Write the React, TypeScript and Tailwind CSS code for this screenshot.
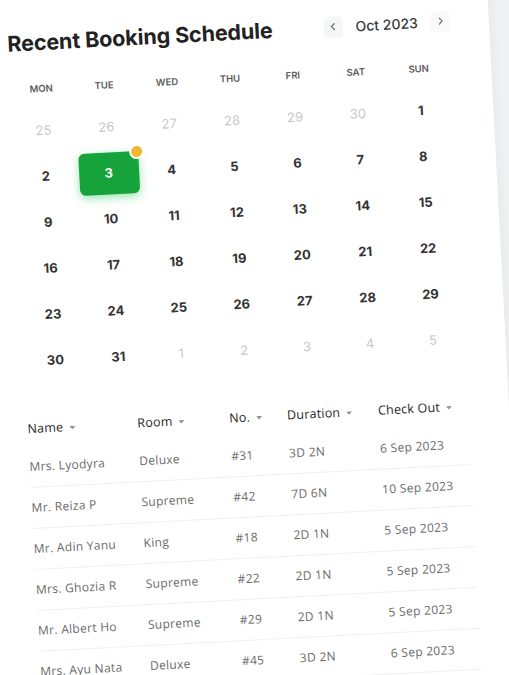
import React from 'react';
import { ChevronLeft, ChevronRight } from 'lucide-react';

const days = ['MON', 'TUE', 'WED', 'THU', 'FRI', 'SAT', 'SUN'];

type Cell = { d: number; muted?: boolean };

const cells: Cell[] = [
  ...[25, 26, 27, 28, 29, 30].map((d) => ({ d, muted: true })),
  ...Array.from({ length: 31 }, (_, i) => ({ d: i + 1 })),
  ...[1, 2, 3, 4, 5].map((d) => ({ d, muted: true })),
];

const bookings = [
  { name: 'Mrs. Lyodyra', room: 'Deluxe', no: '#31', dur: '3D 2N', out: '6 Sep 2023' },
  { name: 'Mr. Reiza P', room: 'Supreme', no: '#42', dur: '7D 6N', out: '10 Sep 2023' },
  { name: 'Mr. Adin Yanu', room: 'King', no: '#18', dur: '2D 1N', out: '5 Sep 2023' },
  { name: 'Mrs. Ghozia R', room: 'Supreme', no: '#22', dur: '2D 1N', out: '5 Sep 2023' },
  { name: 'Mr. Albert Ho', room: 'Supreme', no: '#29', dur: '2D 1N', out: '5 Sep 2023' },
  { name: 'Mrs. Ayu Nata', room: 'Deluxe', no: '#45', dur: '3D 2N', out: '6 Sep 2023' },
];

const Caret = () => (
  <svg width="6" height="4" viewBox="0 0 6 4" className="ml-1.5 mt-0.5">
    <path d="M0 0h6L3 3.5z" fill="#909090" />
  </svg>
);

const Header = ({ label }: { label: string }) => (
  <div className="flex items-center text-[12.5px] font-medium tracking-[0.2px] text-[#262626]">
    {label}
    <Caret />
  </div>
);

const BookingCalendar: React.FC = () => {
  return (
    <div className="w-[509px] h-[675px] overflow-hidden bg-[#eef2f2]">
      <div className="-ml-[100px] w-[587px] min-h-[760px] pl-[100px] bg-white shadow-[2px_0_14px_rgba(0,0,0,0.04)] origin-[100px_0px] -rotate-3">
        <div className="w-[487px] pt-[30px] pl-[5px] font-['Inter',sans-serif]">
          {/* header */}
          <div className="flex items-center h-[28px] w-[441px]">
            <h1 className="text-[21.5px] font-bold text-[#222] tracking-[-0.1px]">
              Recent Booking Schedule
            </h1>
            <div className="ml-auto flex items-center -mr-[2px]">
              <button className="w-[19px] h-[21px] flex items-center justify-center rounded bg-[#f5f6f7] text-[#666]">
                <ChevronLeft size={12} strokeWidth={2.25} />
              </button>
              <span className="mx-[13px] text-[14px] font-medium text-[#3a3a3a]">Oct 2023</span>
              <button className="w-[19px] h-[21px] flex items-center justify-center rounded bg-[#f9f9fa] text-[#666]">
                <ChevronRight size={12} strokeWidth={2.25} />
              </button>
            </div>
          </div>

          {/* calendar */}
          <div className="mt-[23px] w-[441px] grid grid-cols-7">
            {days.map((d) => (
              <div key={d} className="h-[20px] flex items-center justify-center text-[9.5px] font-semibold text-[#5a5a5a]">
                {d}
              </div>
            ))}
          </div>
          <div className="mt-[9px] w-[441px] grid grid-cols-7">
            {cells.map((c, i) => {
              const selected = !c.muted && c.d === 3;
              return (
                <div key={i} className="h-[46px] flex items-center justify-center">
                  {selected ? (
                    <div className="relative w-[60px] h-[42px] rounded-md bg-[#17a33b] shadow-[0_3px_10px_rgba(34,197,94,0.45)] flex items-center justify-center text-[13px] font-bold text-white">
                      3
                      <span className="absolute -top-[7px] -right-[6px] w-[15px] h-[15px] rounded-full bg-[#f4b52f] border-2 border-white" />
                    </div>
                  ) : (
                    <span
                      className={
                        c.muted
                          ? 'text-[13px] text-[#c9c9c9]'
                          : 'text-[13px] font-bold text-[#333]'
                      }
                    >
                      {c.d}
                    </span>
                  )}
                </div>
              );
            })}
          </div>

          {/* table */}
          <div className="mt-[26px] w-[441px] font-['Open_Sans',sans-serif]">
            <div className="grid grid-cols-[110px_92px_58px_91px_1fr] h-[36px] items-center">
              <Header label="Name" />
              <Header label="Room" />
              <Header label="No." />
              <Header label="Duration" />
              <Header label="Check Out" />
            </div>
            {bookings.map((b) => (
              <div
                key={b.name}
                className="grid grid-cols-[110px_92px_58px_91px_1fr] h-[41px] items-center border-b border-[#f0f0f0] text-[12px] tracking-[0.3px] text-[#6a6a6a]"
              >
                <span>{b.name}</span>
                <span>{b.room}</span>
                <span>{b.no}</span>
                <span>{b.dur}</span>
                <span>{b.out}</span>
              </div>
            ))}
          </div>
        </div>
      </div>
    </div>
  );
};

export default function App() {
  return <BookingCalendar />;
}
